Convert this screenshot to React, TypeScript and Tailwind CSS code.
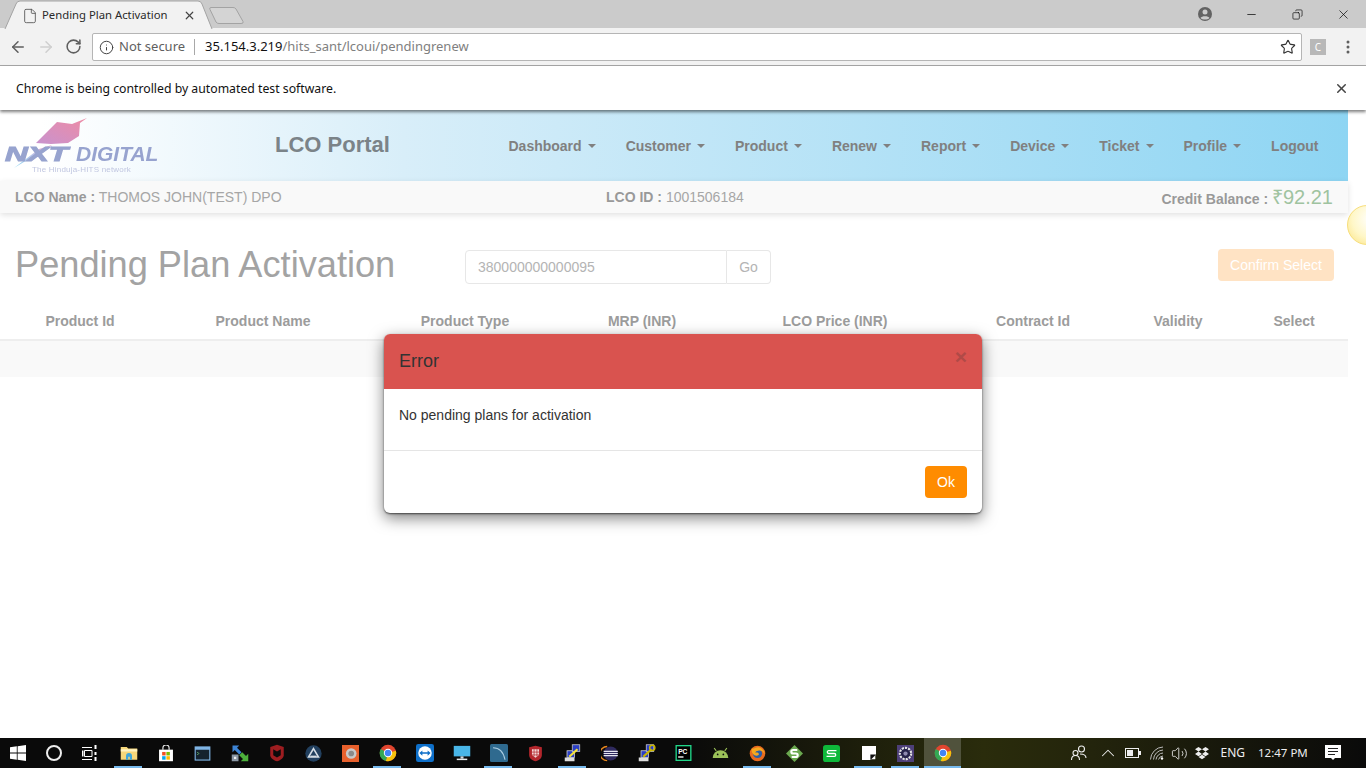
import { ArrowLeft, ArrowRight, RotateCw, Info, Star, X, Minus, File, Copy, ChevronUp, Volume2 } from "lucide-react";

const navItems = ["Dashboard", "Customer", "Product", "Renew", "Report", "Device", "Ticket", "Profile"];
const columns = ["Product Id", "Product Name", "Product Type", "MRP (INR)", "LCO Price (INR)", "Contract Id", "Validity", "Select"];

const ui = "font-['Noto_Sans','Open_Sans',sans-serif]";
const page = "font-['Liberation_Sans',Arial,sans-serif]";

function ChromeIcon() {
  return (
    <svg width="18" height="18" viewBox="0 0 24 24">
      <circle cx="12" cy="12" r="11" fill="#e0452f" />
      <path d="M12 12 L22.5 9 A11 11 0 0 1 9 22.6 Z" fill="#f4c20d" />
      <path d="M12 12 L9 22.6 A11 11 0 0 1 2.3 6.5 Z" fill="#34a853" />
      <circle cx="12" cy="12" r="5.6" fill="#fff" />
      <circle cx="12" cy="12" r="4.3" fill="#4285f4" />
    </svg>
  );
}

function PuttyIcon({ key2 }: { key2?: boolean }) {
  return (
    <svg width="18" height="18" viewBox="0 0 24 24">
      <rect x="1" y="18" width="13" height="5" fill="#ddd" />
      <rect x="4" y="9" width="10" height="9" fill="#2b3fc4" stroke="#ddd" />
      <rect x="11" y="1" width="10" height="9" fill="#2b3fc4" stroke="#ccc" />
      <path d="M7 17 L18 7" stroke={key2 ? "#c8b400" : "#f4e23a"} strokeWidth="3" />
      {key2 && <circle cx="19" cy="5" r="3.5" fill="none" stroke="#c8b400" strokeWidth="2" />}
    </svg>
  );
}

const taskIcons = [
  <svg key="folder" width="18" height="16" viewBox="0 0 24 20">
    <path d="M1 2h8l2 2h12v15H1z" fill="#f6d77a" />
    <rect x="1" y="5" width="22" height="3" fill="#fff2c0" />
    <path d="M8 19v-5a4 4 0 0 1 8 0v5h-3v-4h-2v4z" fill="#3ea6dc" />
  </svg>,
  <svg key="store" width="16" height="17" viewBox="0 0 20 22">
    <path d="M6 6V4a4 4 0 0 1 8 0v2" fill="none" stroke="#eee" strokeWidth="1.5" />
    <rect x="1" y="6" width="18" height="15" fill="#fff" />
    <rect x="5" y="9" width="4.5" height="4.5" fill="#f25022" />
    <rect x="10.5" y="9" width="4.5" height="4.5" fill="#7fba00" />
    <rect x="5" y="14.5" width="4.5" height="4.5" fill="#00a4ef" />
    <rect x="10.5" y="14.5" width="4.5" height="4.5" fill="#ffb900" />
  </svg>,
  <svg key="term" width="17" height="15" viewBox="0 0 22 20">
    <rect x="0.5" y="0.5" width="21" height="19" fill="#7fb4e4" />
    <rect x="2" y="5" width="18" height="13" fill="#15222e" />
    <path d="M4 8l2 2-2 2" stroke="#7fe07f" fill="none" />
  </svg>,
  <svg key="net" width="18" height="18" viewBox="0 0 24 24">
    <path d="M2 2h9l-3 3 6 6-3 3-6-6-3 3z" fill="#3d84d6" />
    <path d="M23 23h-10l3-3-5-5 4-4 5 5 3-3z" fill="#4cb03c" />
    <rect x="1" y="14" width="9" height="9" fill="#8a97a5" />
    <rect x="4" y="17" width="3" height="3" fill="#eee" />
  </svg>,
  <svg key="mcafee" width="16" height="18" viewBox="0 0 20 24">
    <path d="M10 1 19 4v11c0 4-5 7-9 8-4-1-9-4-9-8V4z" fill="#9d1d20" />
    <path d="M5 7l5 3 5-3v8l-5 3-5-3z" fill="#0a0a0a" />
  </svg>,
  <svg key="aura" width="17" height="17" viewBox="0 0 24 24">
    <circle cx="12" cy="12" r="11.5" fill="#22405f" />
    <path d="M12 5l7 12H5z" fill="none" stroke="#d5dde5" strokeWidth="2.2" />
    <path d="M8 16h8" stroke="#d5dde5" strokeWidth="2" />
  </svg>,
  <svg key="orange" width="17" height="17" viewBox="0 0 24 24">
    <rect width="24" height="24" fill="#e8602c" />
    <circle cx="13" cy="12" r="7.5" fill="#c9c9c9" />
    <circle cx="13" cy="12" r="4" fill="#8a8a8a" />
  </svg>,
  <ChromeIcon key="chrome1" />,
  <svg key="tv" width="18" height="18" viewBox="0 0 24 24">
    <rect width="24" height="24" rx="3" fill="#0e6fc9" />
    <circle cx="12" cy="12" r="9" fill="#fff" />
    <path d="M4.5 12l4-3.5V11h7V8.500l4 3.500-4 3.500V13h-7v2.500z" fill="#0e6fc9" />
  </svg>,
  <svg key="monitor" width="18" height="16" viewBox="0 0 24 20">
    <rect x="1" y="0.500" width="22" height="14" fill="#49b6e8" />
    <rect x="10" y="14.500" width="4" height="3" fill="#cfd8de" />
    <rect x="5" y="17.500" width="14" height="2" fill="#e5eaed" />
  </svg>,
  <svg key="mysql" width="18" height="18" viewBox="0 0 24 24">
    <rect width="24" height="24" rx="2" fill="#2f6a8f" />
    <path d="M4 5c8 0 14 6 16 16" fill="none" stroke="#a9cbe0" strokeWidth="1.500" />
  </svg>,
  <svg key="shield" width="15" height="17" viewBox="0 0 20 24">
    <path d="M10 1 19 3v11c0 5-5 8-9 9-4-1-9-4-9-9V3z" fill="#b3262c" />
    <path d="M5 6h10v8l-5 4-5-4z" fill="#f2d6d6" />
    <path d="M8 6v10M12 6v10M5 10h10M5 14h10" stroke="#b3262c" />
  </svg>,
  <PuttyIcon key="putty1" />,
  <svg key="eclipse" width="18" height="17" viewBox="0 0 24 24">
    <path d="M8 2a10 10 0 0 0 0 20" fill="none" stroke="#e8871e" strokeWidth="2" />
    <circle cx="13" cy="12" r="10" fill="#2f2a5e" />
    <path d="M3 9h20M3 12h20M3 15h20" stroke="#e6e6f0" strokeWidth="1.500" />
  </svg>,
  <PuttyIcon key="putty2" key2 />,
  <svg key="pc" width="17" height="16" viewBox="0 0 24 24">
    <rect x="1" y="1" width="22" height="22" fill="#000" stroke="#21d789" strokeWidth="2" />
    <text x="4" y="13" fontSize="10" fontWeight="700" fill="#fff" fontFamily="Liberation Sans, sans-serif">PC</text>
    <rect x="4" y="17" width="8" height="2" fill="#fff" />
  </svg>,
  <svg key="android" width="17" height="12" viewBox="0 0 24 16">
    <path d="M1 15a11 11 0 0 1 22 0z" fill="#9cc259" />
    <path d="M6 5 3 1M18 5l3-4" stroke="#9cc259" strokeWidth="1.500" />
    <circle cx="8" cy="10" r="1.200" fill="#0a0a0a" />
    <circle cx="16" cy="10" r="1.200" fill="#0a0a0a" />
  </svg>,
  <svg key="firefox" width="17" height="17" viewBox="0 0 24 24">
    <circle cx="12" cy="12" r="11" fill="#e66a1f" />
    <circle cx="12" cy="12" r="6.500" fill="#2a5fa8" />
    <path d="M4 5c3 1 5-2 9-2 6 1 9 6 9 10-2-4-5-6-9-5-2 0-4 1-4 3 2-1 5 0 5 2s-4 3-7 1c-3-3-4-6-3-9z" fill="#f6a81f" />
  </svg>,
  <svg key="sublime" width="17" height="17" viewBox="0 0 24 24">
    <path d="M12 0 24 12 12 24 0 12z" fill="#6aa84f" />
    <path d="M16 7H10a2.500 2.500 0 0 0 0 5h4a2.500 2.500 0 0 1 0 5H8" fill="none" stroke="#fff" strokeWidth="3" />
  </svg>,
  <svg key="s" width="17" height="17" viewBox="0 0 24 24">
    <rect width="24" height="24" rx="4" fill="#0eb83a" />
    <path d="M19 8H8a2 2 0 0 0 0 4h8a2 2 0 0 1 0 4H5" fill="none" stroke="#fff" strokeWidth="1.800" />
  </svg>,
  <svg key="note" width="14" height="14" viewBox="0 0 20 20">
    <path d="M0 0h20v12l-8 8H0z" fill="#fff" />
    <path d="M19 13v6h-6z" fill="#fff" />
    <path d="M12 12h8l-8 8z" fill="#111" />
  </svg>,
  <svg key="gear" width="17" height="17" viewBox="0 0 24 24">
    <rect width="24" height="24" fill="#4d3f78" />
    <circle cx="12" cy="12" r="8" fill="#26224a" stroke="#e5e5e5" strokeWidth="3" strokeDasharray="3 1.500" />
    <circle cx="12" cy="12" r="3" fill="#8f8ab0" />
  </svg>,
  <ChromeIcon key="chrome2" />,
];

// which pinned apps are running (underline under the icon)
const running = [0, 7, 10, 12, 17, 20, 21];

function NxtLogo() {
  return (
    <div className="relative w-[153px] h-[56px] ml-[5px] mt-[9px] shrink-0 blur-[0.4px]">
      <svg className="absolute left-0 top-0 overflow-visible" width="153" height="56" viewBox="0 0 153 56">
        <defs>
          <linearGradient id="bird" x1="0" y1="1" x2="1" y2="0">
            <stop offset="0" stopColor="#c893cf" />
            <stop offset="1" stopColor="#ee8ba4" />
          </linearGradient>
          <linearGradient id="tail" x1="0" y1="1" x2="1" y2="0">
            <stop offset="0" stopColor="#8fd8f2" />
            <stop offset="0.5" stopColor="#b5c4ea" />
            <stop offset="1" stopColor="#e79cc0" />
          </linearGradient>
        </defs>
        <path d="M31 24 L52 3 L67 5 L82 -1 L75 4 L74 17 L63 24 L46 25 Z" fill="url(#bird)" />
        <path d="M47 26 L9 49 L34 30 Z" fill="url(#tail)" />
      </svg>
      <span className={`${page} absolute left-0 top-[24px] italic font-bold text-[21px] leading-[21px] origin-left scale-x-[1.5] text-[#97a3cf] [-webkit-text-stroke:1px_#97a3cf]`}>NXT</span>
      <span className={`${page} absolute left-[71px] top-[24px] italic font-bold text-[21px] leading-[21px] text-[#97a3cf]`}>DIGITAL</span>
      <span className={`${page} absolute left-[27px] top-[46px] text-[8px] leading-[10px] tracking-[0.2px] text-[#c0c6e0] whitespace-nowrap`}>The Hinduja-HITS network</span>
    </div>
  );
}

export default function App() {
  return (
    <div className={`relative w-[1366px] h-[768px] overflow-hidden bg-white flex flex-col ${page}`}>
      {/* tab strip */}
      <div className="relative h-[28px] bg-[#cbcbcb] shrink-0">
        <svg className="absolute left-0 top-0" width="250" height="29" viewBox="0 0 250 29">
          <path d="M5 29 L16 4 Q17 1 20 1 H198 Q201 1 202 4 L212 29" fill="#f2f2f2" stroke="#a3a3a3" />
          <path d="M211 7.500 Q209 7.500 210 9.500 L216 22 Q217 23.500 219 23.500 H241 Q244 23.500 243 21.500 L236 9 Q235 7.500 233 7.500 Z" fill="#d4d4d4" stroke="#a3a3a3" />
        </svg>
        <div className={`${ui} relative flex items-center h-[31px] pl-[22px] text-[11.3px] text-[#2a2a2a]`}>
          <File size={16} strokeWidth={1.3} className="text-[#555]" />
          <span className="ml-[4px] w-[138px] whitespace-nowrap">Pending Plan Activation</span>
          <X size={13} strokeWidth={2.2} className="ml-[3px] text-[#444]" />
        </div>
        <div className="absolute right-0 top-0 h-[28px] flex items-center">
          <svg width="14" height="14" viewBox="0 0 14 14" className="mr-[16px]">
            <circle cx="7" cy="7" r="7" fill="#636363" />
            <circle cx="7" cy="5" r="2.500" fill="#cbcbcb" />
            <path d="M2.500 11c1-2.500 8-2.500 9 0-2 2-7 2-9 0z" fill="#cbcbcb" />
          </svg>
          <div className="w-[46px] flex justify-center"><Minus size={13} strokeWidth={1.3} className="text-black" /></div>
          <div className="w-[46px] flex justify-center"><Copy size={11} strokeWidth={1.4} className="text-black -scale-x-100" /></div>
          <div className="w-[46px] flex justify-center"><X size={15} strokeWidth={1.1} className="text-black" /></div>
        </div>
      </div>

      {/* toolbar */}
      <div className="h-[38px] bg-[#f2f2f2] border-b border-[#a8a8a8] flex items-center shrink-0">
        <ArrowLeft size={18} strokeWidth={2} className="ml-[9px] text-[#5f5f5f]" />
        <ArrowRight size={18} strokeWidth={2} className="ml-[10px] text-[#cfcfcf]" />
        <RotateCw size={17} strokeWidth={2.2} className="ml-[10px] text-[#5f5f5f]" />
        <div className={`${ui} ml-[10px] w-[1210px] h-[28px] bg-white border border-[#b5b5b5] rounded-[2px] flex items-center pt-px text-[13px] shrink-0`}>
          <Info size={15} strokeWidth={1.6} className="ml-[6px] text-[#444]" />
          <span className="ml-[5px] text-[#5f5f5f]">Not secure</span>
          <span className="ml-[9px] w-px h-[16px] bg-[#a8a8a8]" />
          <span className="ml-[10px] text-[#111]">35.154.3.219</span>
          <span className="text-[#808080]">/hits_sant/lcoui/pendingrenew</span>
          <Star size={16} strokeWidth={1.7} className="ml-auto mr-[5px] text-[#333]" />
        </div>
        <div className={`${ui} ml-[8px] w-[16px] h-[16px] bg-[#b8b8b8] text-white text-[10px] leading-[16px] text-center`}>C</div>
        <svg width="4" height="14" viewBox="0 0 4 14" className="ml-[20px]">
          <circle cx="2" cy="2" r="1.500" fill="#5f5f5f" />
          <circle cx="2" cy="7" r="1.500" fill="#5f5f5f" />
          <circle cx="2" cy="12" r="1.500" fill="#5f5f5f" />
        </svg>
      </div>

      {/* automation infobar */}
      <div className={`${ui} h-[44px] bg-white flex items-center justify-between pl-[16px] pr-[17px] text-[12.25px] text-[#111] shadow-[0_2px_3px_rgba(0,0,0,0.5)] z-10 shrink-0`}>
        <span className="pt-[2px]">Chrome is being controlled by automated test software.</span>
        <X size={15} strokeWidth={2.4} className="text-[#444]" />
      </div>

      {/* page */}
      <div className="relative flex-1 w-[1348px]">
        <div className="h-[71px] flex bg-[linear-gradient(to_right,#ffffff_0%,#ffffff_3%,#d8eef9_30%,#8ed5f3_100%)]">
          <NxtLogo />
          <div className="ml-[117px] mt-[21px] text-[22px] leading-[28px] font-bold text-[#7b8388]">LCO Portal</div>
          <nav className="ml-auto mr-[14.500px] flex items-start pt-[28px] text-[14px] leading-[16px] font-bold text-[#808080]">
            {navItems.map((n) => (
              <div key={n} className="pl-[15px] pr-[15px] flex items-center whitespace-nowrap">
                {n}
                <span className="ml-[6px] border-x-[4px] border-x-transparent border-t-[4px] border-t-[#808080]" />
              </div>
            ))}
            <div className="pl-[15px] pr-[15px]">Logout</div>
          </nav>
        </div>
        <div className="h-[32px] bg-[#f9f9f9] shadow-[0_2px_6px_rgba(0,0,0,0.12)] grid grid-cols-[606px_1fr_auto] pl-[15px] pr-[15px] text-[14px] text-[#a6a6a6] leading-[32px]">
          <div className="w-[590px]"><b className="text-[#999]">LCO Name :</b> THOMOS JOHN(TEST) DPO</div>
          <div className="-ml-[15px]"><b className="text-[#999]">LCO ID :</b> 1001506184</div>
          <div className="flex items-baseline"><b className="text-[#999]">Credit Balance :&nbsp;</b><span className="text-[20px] text-[#9fc3a0]">₹92.21</span></div>
        </div>

        <div className="flex items-start mt-[32px] pl-[15px] pr-[14px]">
          <h1 className="w-[450px] text-[36.200px] leading-[40px] text-[#a3a3a3]">Pending Plan Activation</h1>
          <div className="flex text-[14px] mt-[5px]">
            <div className="w-[262px] h-[34px] border border-[#e7e7e7] rounded-l-[4px] px-[12px] leading-[32px] text-[#b4b4b4]">380000000000095</div>
            <div className="w-[44px] h-[34px] border border-l-0 border-[#e7e7e7] rounded-r-[4px] text-center leading-[32px] text-[#b4b4b4]">Go</div>
          </div>
          <div className="ml-auto mt-[4px] w-[116px] h-[32px] rounded-[4px] bg-[#ffe3c4] text-white text-[14px] leading-[32px] text-center">Confirm Select</div>
        </div>

        <div className="mt-[18px] grid grid-cols-[160px_206px_198px_156px_230px_166px_124px_108px] h-[38px] border-b-2 border-[#eeeeee] text-[14px] leading-[36px] font-bold text-[#9c9c9c] text-center whitespace-nowrap">
          {columns.map((c) => (
            <div key={c}>{c}</div>
          ))}
        </div>
        <div className="h-[36px] bg-[#f9f9f9]" />
      </div>

      {/* scroll hint bubble at the edge */}
      <div className="absolute left-[1347px] top-[205px] w-[40px] h-[40px] rounded-full border border-[#f7de7a] bg-[radial-gradient(circle_at_60%_35%,#ffffff_0%,#fff7c8_55%,#fbe27f_100%)]" />

      {/* modal */}
      <div className="absolute left-[384px] top-[334px] w-[598px] h-[179px] bg-white rounded-[6px] overflow-hidden shadow-[0_5px_15px_rgba(0,0,0,0.5),0_1px_2px_rgba(0,0,0,0.6)] flex flex-col">
        <div className="h-[55px] bg-[#d9534f] flex items-start justify-between pl-[15px] pr-[15px] shrink-0">
          <span className="mt-[17px] text-[18px] leading-[20px] text-[#333]">Error</span>
          <span className="mt-[12px] text-[21px] leading-[21px] font-bold text-[#b04a47]">×</span>
        </div>
        <div className="h-[62px] px-[15px] pt-[18px] text-[14px] leading-[16px] text-[#333] border-b border-[#e5e5e5] shrink-0">No pending plans for activation</div>
        <div className="flex justify-end px-[15px] pt-[15px]">
          <div className="w-[42px] h-[32px] rounded-[4px] bg-[#ff8c00] text-white text-[14px] leading-[32px] text-center">Ok</div>
        </div>
      </div>

      {/* taskbar */}
      <div className={`${ui} absolute left-0 bottom-0 w-full h-[30px] flex items-center text-white bg-[linear-gradient(to_right,#0a0a0a_0%,#0a0a0a_50%,#2a2c0c_72%,#23240c_80%,#0a0a0a_100%)]`}>
        <svg width="16" height="16" viewBox="0 0 16 16" className="ml-[10px]">
          <path d="M0 2.300 6.800 1.300V7.600H0zM7.600 1.200 16 0V7.600H7.600zM0 8.400H6.800V14.700L0 13.700zM7.600 8.400H16V16L7.600 14.800z" fill="#fff" />
        </svg>
        <div className="ml-[20px] w-[16px] h-[16px] rounded-full border-2 border-[#eee]" />
        <svg width="16" height="16" viewBox="0 0 16 16" className="ml-[20px]" fill="none" stroke="#fff" strokeWidth="1">
          <path d="M0 2.500H10M2.500 5.500H10V11.500H2.500ZM0 14.500H10" />
          <path d="M0.500 5.500V11.500M13.500 0V4M13.500 7V10M13.500 12V16" strokeWidth="2" />
        </svg>
        <div className="ml-[12px] flex h-[30px]">
          {taskIcons.map((icon, i) => (
            <div key={i} className={`relative w-[37px] h-[30px] flex items-center justify-center ${i === 22 ? "bg-[#50523c]" : ""}`}>
              {icon}
              {running.includes(i) && <div className="absolute left-[4px] right-[5px] bottom-0 h-[2px] bg-[#76b9ed]" />}
              {i === 22 && <div className="absolute inset-x-0 bottom-0 h-[2px] bg-[#76b9ed]" />}
            </div>
          ))}
        </div>
        <div className="ml-auto flex items-center h-[30px]">
          <svg width="16" height="16" viewBox="0 0 16 16" fill="none" stroke="#eee" strokeWidth="1.100">
            <circle cx="10.500" cy="4" r="3" />
            <circle cx="4.500" cy="8" r="2.500" />
            <path d="M0.500 15c0-3 2-4.500 4-4.500S8.500 12 8.500 15M9 9c3 0 6 1 6 4" />
          </svg>
          <ChevronUp size={22} strokeWidth={1.1} className="ml-[10px] -mr-[3px] text-[#eee]" />
          <svg width="16" height="10" viewBox="0 0 16 10" className="ml-[9px]">
            <rect x="0.500" y="0.500" width="13" height="9" fill="none" stroke="#eee" />
            <rect x="2" y="2" width="6" height="6" fill="#eee" />
            <rect x="14" y="3" width="2" height="4" fill="#eee" />
          </svg>
          <svg width="14" height="14" viewBox="0 0 14 14" className="ml-[9px]" fill="none" stroke="#bbb" strokeWidth="1">
            <path d="M0.500 13.500A13 13 0 0 1 13 1M3.500 13.500A10 10 0 0 1 13 4M6 13.500A7.500 7.500 0 0 1 13 7M8.500 13.500A5 5 0 0 1 13 10" />
            <circle cx="12" cy="12.500" r="1.200" fill="#fff" stroke="none" />
          </svg>
          <Volume2 size={17} strokeWidth={1.2} className="ml-[7px] text-[#eee]" />
          <svg width="14" height="13" viewBox="0 0 14 13" className="ml-[7px]" fill="#eee">
            <path d="M3.500 0 7 2.300 3.500 4.600 0 2.300zM10.500 0 14 2.300 10.500 4.600 7 2.300zM3.500 4.600 7 6.900 3.500 9.200 0 6.900zM10.500 4.600 14 6.900 10.500 9.200 7 6.900zM3.500 10 7 7.800 10.500 10 7 12.300z" />
          </svg>
          <span className="ml-[11px] text-[12px] text-[#eee]">ENG</span>
          <span className="ml-[13px] w-[48px] text-[11.500px] text-[#eee] whitespace-nowrap">12:47 PM</span>
          <svg width="16" height="16" viewBox="0 0 16 16" className="ml-[19px] mr-[25px]">
            <path d="M0 0H16V13H10L8 15 6 13H0Z" fill="#fff" />
            <path d="M3 3.500H13M3 6.500H13M3 9.500H10" stroke="#222" />
          </svg>
        </div>
      </div>
    </div>
  );
}
